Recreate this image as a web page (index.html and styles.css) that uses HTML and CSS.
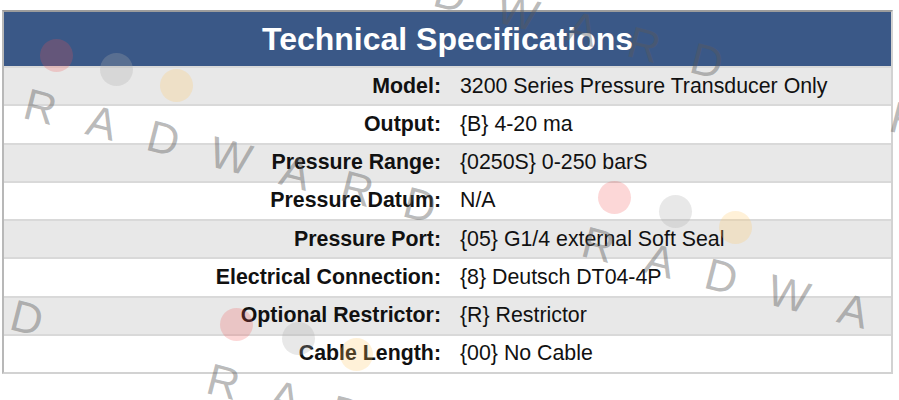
FILE: index.html
```html
<!DOCTYPE html>
<html lang="en">
<head>
<meta charset="utf-8">
<title>Technical Specifications</title>
<link rel="stylesheet" href="styles.css">
</head>
<body>
<div class="page">
  <div class="spec">
    <div class="spec-head">Technical Specifications</div>
    <div class="spec-row alt"><div class="k">Model:</div><div class="v">3200 Series Pressure Transducer Only</div></div>
    <div class="spec-row"><div class="k">Output:</div><div class="v">{B} 4-20 ma</div></div>
    <div class="spec-row alt"><div class="k">Pressure Range:</div><div class="v">{0250S} 0-250 barS</div></div>
    <div class="spec-row"><div class="k">Pressure Datum:</div><div class="v">N/A</div></div>
    <div class="spec-row alt"><div class="k">Pressure Port:</div><div class="v">{05} G1/4 external Soft Seal</div></div>
    <div class="spec-row"><div class="k">Electrical Connection:</div><div class="v">{8} Deutsch DT04-4P</div></div>
    <div class="spec-row alt"><div class="k">Optional Restrictor:</div><div class="v">{R} Restrictor</div></div>
    <div class="spec-row"><div class="k">Cable Length:</div><div class="v">{00} No Cable</div></div>
  </div>

  <div class="wm" aria-hidden="true">
    <span class="wm-word w1">RADWARD</span>
    <span class="wm-word w2">RADWARD</span>
    <span class="wm-word w3">RADWARD</span>
    <span class="wm-word w4">RADWARD</span>
    <span class="wm-word w5">RADWARD</span>
    <span class="wm-word w6">RADWARD</span>

    <span class="dot red a1"></span>
    <span class="dot grey a2"></span>
    <span class="dot orange a3"></span>
    <span class="dot red b1"></span>
    <span class="dot grey b2"></span>
    <span class="dot orange b3"></span>
    <span class="dot red c1"></span>
    <span class="dot grey c2"></span>
    <span class="dot orange c3"></span>
  </div>
</div>
</body>
</html>
```

FILE: styles.css
```css
html, body {
  margin: 0;
  padding: 0;
  background: #ffffff;
}

body {
  width: 899px;
  height: 400px;
  overflow: hidden;
  font-family: "Liberation Sans", Arial, sans-serif;
}

.page {
  position: relative;
  width: 899px;
  height: 400px;
  padding: 10px 0 0 2px;
  box-sizing: border-box;
}

.spec {
  width: 891px;
  box-sizing: border-box;
  border: 2px solid #d2d2d2;
  border-top-color: #9c9c9c;
  border-left-color: #b8b8b8;
  display: flex;
  flex-direction: column;
}

.spec-head {
  height: 54px;
  background: #3a5887;
  color: #ffffff;
  font-weight: bold;
  font-size: 32px;
  display: flex;
  align-items: center;
  justify-content: center;
}

.spec-row {
  height: 38.25px;
  box-sizing: border-box;
  border-top: 2px solid #d9d9d9;
  background: #ffffff;
  display: grid;
  grid-template-columns: 444px 1fr;
  align-items: center;
  font-size: 21.33px;
  color: #111111;
}

.spec-row.alt {
  background: #e8e8e8;
}

.k {
  text-align: right;
  font-weight: bold;
  padding-right: 7px;
  white-space: nowrap;
}

.v {
  padding-left: 12px;
  white-space: nowrap;
}

/* watermark overlay */
.wm {
  position: absolute;
  inset: 0;
  pointer-events: none;
  overflow: hidden;
}

.wm-word {
  position: absolute;
  font-family: "Liberation Sans", Arial, sans-serif;
  font-size: 44px;
  line-height: 44px;
  letter-spacing: 33px;
  color: rgba(90, 90, 90, 0.42);
  white-space: nowrap;
  transform-origin: 0 50%;
  transform: rotate(14.5deg);
}

.w1 { left: 25px;   top: 81px; }
.w2 { left: 312px;  top: -63px; }
.w3 { left: 583px;  top: 219px; }
.w4 { left: -368px; top: 194px; }
.w5 { left: 208px;  top: 356px; }
.w6 { left: 891px;  top: 94px; }

.dot {
  position: absolute;
  width: 33px;
  height: 33px;
  border-radius: 50%;
}

.dot.red { background: rgba(240, 80, 80, 0.23); }
.dot.grey { background: rgba(171, 171, 171, 0.28); }
.dot.orange { background: rgba(255, 200, 100, 0.25); }

.a1 { left: 40px;  top: 39px; }
.a2 { left: 100px; top: 53px; }
.a3 { left: 160px; top: 69px; }
.b1 { left: 598px; top: 181px; }
.b2 { left: 659px; top: 195px; }
.b3 { left: 719px; top: 211px; }
.c1 { left: 220px; top: 308px; }
.c2 { left: 282px; top: 322px; }
.c3 { left: 340px; top: 338px; }
```
